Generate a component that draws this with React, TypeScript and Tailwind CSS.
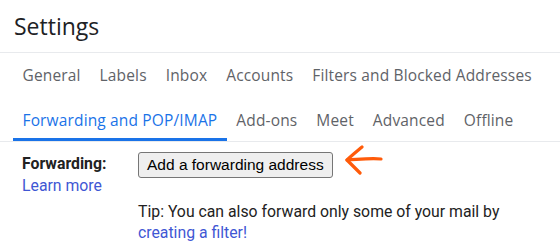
import React from 'react';

const tabsTop = ['General', 'Labels', 'Inbox', 'Accounts', 'Filters and Blocked Addresses'];
const tabsBottom = ['Forwarding and POP/IMAP', 'Add-ons', 'Meet', 'Advanced', 'Offline'];

const Tab: React.FC<{ label: string; active?: boolean }> = ({ label, active }) => (
  <div
    className={`px-[9.5px] pt-[12px] pb-[8px] border-b-[3px] whitespace-nowrap ${
      active ? 'border-[#1a73e8] text-[#1a73e8]' : 'border-transparent text-[#5f6368]'
    }`}
  >
    {label}
  </div>
);

const Arrow: React.FC = () => (
  <svg width="42" height="32" viewBox="0 0 42 32" className="ml-[11px] -mt-[8px]">
    {/* hand-drawn orange arrow pointing left */}
    <path
      d="M3 15 C 14 14.5, 26 13, 37 14"
      stroke="#ff5b0a"
      strokeWidth="3.2"
      strokeLinecap="round"
      fill="none"
    />
    <path
      d="M18 2 C 12 7, 7 11, 3 15 C 7 19, 11 23, 16 28"
      stroke="#ff5b0a"
      strokeWidth="3.2"
      strokeLinecap="round"
      strokeLinejoin="round"
      fill="none"
    />
  </svg>
);

export default function App() {
  return (
    <div className="w-[560px] h-[252px] bg-white overflow-hidden font-['Roboto',sans-serif]">
      <div className="h-[53px] border-b border-[#e8eaed] pl-[14px] pt-[11px]">
        <h1 className="text-[23px] leading-[30px] text-[#202124] font-['Open_Sans',sans-serif]">Settings</h1>
      </div>

      <div className="px-[13px] font-['Open_Sans',sans-serif] text-[15.5px] leading-[20px] tracking-[0.15px]">
        <div className="flex">
          {tabsTop.map((t) => (
            <Tab key={t} label={t} />
          ))}
        </div>
        <div className="flex mt-[2px]">
          {tabsBottom.map((t, i) => (
            <Tab key={t} label={t} active={i === 0} />
          ))}
        </div>
      </div>
      <div className="border-t border-[#e8eaed]" />

      <div className="flex pl-[22px] pt-[10px] text-[15.8px] text-[#222]">
        <div className="w-[116px] shrink-0 leading-[22px] pt-[1px]">
          <div className="font-bold">Forwarding:</div>
          <a className="text-[#3f57d4]">Learn more</a>
        </div>
        <div>
          <div className="flex items-center">
            <button className="h-[26px] px-[8px] border border-[#767676] rounded-[3px] bg-[#efefef] text-[15.5px] font-['Liberation_Sans',sans-serif] text-black leading-none">
              Add a forwarding address
            </button>
            <Arrow />
          </div>
          <p className="mt-[23px] leading-[21px]">
            Tip: You can also forward only some of your mail by
            <br />
            <a className="text-[#3f57d4]">creating a filter!</a>
          </p>
        </div>
      </div>
    </div>
  );
}
